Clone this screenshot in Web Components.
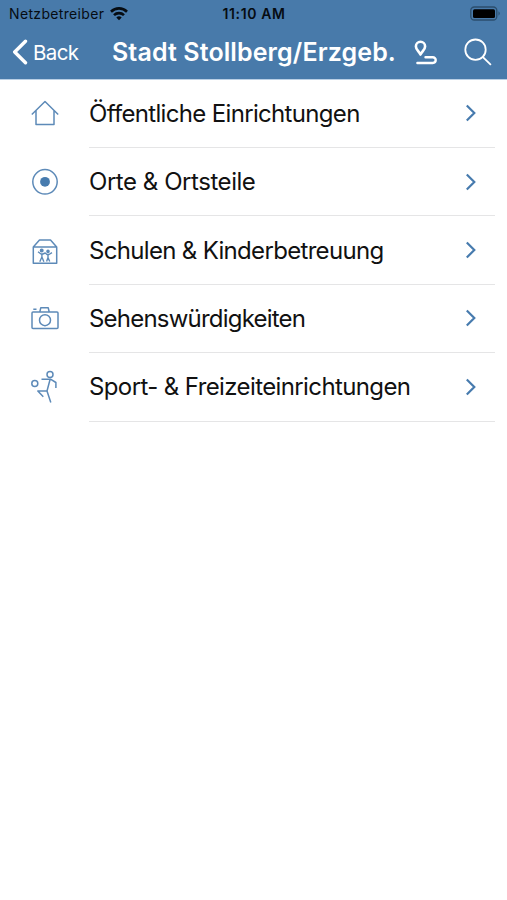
<!DOCTYPE html>
<html lang="de">
<head>
<meta charset="utf-8">
<title>Stadt Stollberg/Erzgeb.</title>
<style>
html, body { margin: 0; height: 100%; background: #fff; }
body { font-family: Inter, "Liberation Sans", sans-serif; overflow: hidden; }
</style>
</head>
<body>
<app-screen>
  <status-bar slot="top"></status-bar>
  <nav-bar slot="top" back="Back">Stadt Stollberg/Erzgeb.</nav-bar>
  <category-row icon="house" style="--ls:-.67px">Öffentliche Einrichtungen</category-row>
  <category-row icon="place" style="--ls:-.45px">Orte &amp; Ortsteile</category-row>
  <category-row icon="school" style="--ls:-.68px">Schulen &amp; Kinderbetreuung</category-row>
  <category-row icon="camera" style="--ls:-.79px">Sehenswürdigkeiten</category-row>
  <category-row icon="sport" style="--ls:-.61px">Sport- &amp; Freizeiteinrichtungen</category-row>
</app-screen>
<script>
class Base extends HTMLElement {
  connectedCallback() {
    if (!this.shadowRoot) this.attachShadow({ mode: 'open' }).innerHTML = this.view();
  }
}

customElements.define('app-screen', class extends Base {
  view() {
    return `<style>
      :host { display: flex; flex-direction: column; height: 900px; background: #fff; }
      header { background: #487aaa; height: 79.600px; border-bottom: 1px solid #b9cfe5; box-sizing: border-box; display: flex; flex-direction: column; }
      main { display: flex; flex-direction: column; }
    </style><header><slot name="top"></slot></header><main><slot></slot></main>`;
  }
});

customElements.define('status-bar', class extends Base {
  view() {
    return `<style>
      :host { display: grid; grid-template-columns: 1fr auto 1fr; align-items: center; height: 27px; padding: 0 6px 0 9px; color: #060c12; font-size: 14px; }
      .left { display: flex; align-items: center; gap: 6px; }
      .carrier { letter-spacing: .34px; }
      .time { font-weight: 600; letter-spacing: .62px; margin-right: 2px; }
      .battery { justify-self: end; }
      svg { display: block; }
    </style>
    <div class="left"><span class="carrier">Netzbetreiber</span>
      <svg width="18" height="14" viewBox="0 0 18 14" fill="none" stroke="#060c12" stroke-width="2.6">
        <path d="M1 4.700C5.500.3 12.500.3 17 4.700"/><path d="M4 8.100C6.800 5.400 11.200 5.400 14 8.100"/>
        <path d="M6.300 10.500Q9 8.100 11.700 10.500L9 13.300Z" fill="#060c12" stroke="none"/></svg></div>
    <span class="time">11:10 AM</span>
    <svg class="battery" width="31" height="15" viewBox="0 0 31 15">
      <rect x=".8" y="1" width="26" height="13" rx="3.500" fill="none" stroke="#2b4e6d" stroke-width="1.300"/>
      <rect x="3" y="3.200" width="22" height="8.800" rx="1.500" fill="#000"/>
      <path d="M28.500 5.300Q31 7.500 28.500 9.700Z" fill="#2b4e6d"/></svg>`;
  }
});

customElements.define('nav-bar', class extends Base {
  view() {
    return `<style>
      :host { display: flex; align-items: center; height: 50px; padding: 0 15px 0 12px; color: #fff; }
      .back { display: flex; align-items: center; width: 100px; gap: 5px; font-size: 20.500px; letter-spacing: -.6px; }
      .title { width: 302px; font-size: 25px; font-weight: 600; letter-spacing: .11px; white-space: nowrap; }
      .find { margin-left: auto; }
      svg { display: block; flex: none; }
    </style>
    <div class="back"><svg width="16" height="26" viewBox="0 0 16 26" fill="none" stroke="#fff" stroke-width="3.400" stroke-linecap="round" stroke-linejoin="round"><path d="M13.500 2.200 2.700 13 13.500 23.800"/></svg><span>${this.getAttribute('back')}</span></div>
    <div class="title"><slot></slot></div>
    <svg width="24" height="26" viewBox="0 0 24 26" fill="none" stroke="#fff">
      <path d="M6.500 15.600C5 12.200 1.900 10.600 1.900 7.400A4.600 4.600 0 0 1 11.100 7.400C11.100 10.600 8 12.200 6.500 15.600Z" stroke-width="2.600" stroke-linejoin="round"/>
      <path d="M11.500 18.200H18.800A2.900 2.900 0 0 1 18.800 24H3.400" stroke-width="2.400" stroke-linecap="round"/></svg>
    <svg class="find" width="28" height="28" viewBox="0 0 28 28" fill="none" stroke="#fff" stroke-width="1.800" stroke-linecap="round"><circle cx="11.500" cy="11.700" r="10.200"/><path d="M18.900 19.100 26.400 26.300"/></svg>`;
  }
});

const ICONS = {
  house: '<path d="M1.800 15.500 15 2.500 28.200 15.500M6 11.800V25.500H24V11.800"/>',
  place: '<circle cx="15" cy="14.800" r="12.200"/><circle cx="15" cy="14.800" r="4.900" fill="#477bae" stroke="none"/>',
  school: '<path d="M3.300 11H26.700V27.200H3.300ZM3.300 11 9.500 4H20.500L26.700 11"/><g stroke-width="1.400"><circle cx="11.700" cy="14.600" r="1.300" fill="#5d8ab8"/><circle cx="18" cy="15.400" r="1.100" fill="#5d8ab8"/><path d="M8 15.800 11 18H12.800L15.200 17 17 18.500H19L22 16.700M11.900 17.500V21.500M18 18V21.700M11.900 21 9.800 25.800M11.900 21 13.900 25.800M18 21.500 16.600 25.500M18 21.500 19.700 25.500"/></g>',
  camera: '<rect x="2" y="8" width="26" height="16.500" rx="1"/><path d="M9.800 8 10.800 3.700H18.200L19.200 8M3.300 5.300H6.500"/><circle cx="15" cy="16.200" r="5.500"/>',
  sport: '<circle cx="4.800" cy="11.500" r="3"/><circle cx="20" cy="2.400" r="3"/><path d="M11.500 7.200H20.500L25.900 10.500V16M20 7.800 17 19H7.800L13.300 24.800M17 19 20.800 30.500"/>'
};

customElements.define('category-row', class extends Base {
  view() {
    return `<style>
      :host { display: grid; grid-template-columns: 89px 406px; height: 68.400px; align-items: center; color: #111; }
      .icon { display: block; margin-left: 30px; overflow: visible; }
      .body { display: flex; align-items: center; justify-content: space-between; box-sizing: border-box; height: 100%; padding-right: 18px; border-bottom: 1px solid #e5e5e6; font-size: 24px; letter-spacing: var(--ls); white-space: nowrap; }
    </style>
    <svg class="icon" width="30" height="30" viewBox="0 0 30 30" fill="none" stroke="#5d8ab8" stroke-width="1.500" stroke-linejoin="round">${ICONS[this.getAttribute('icon')]}</svg>
    <div class="body"><span><slot></slot></span>
      <svg width="12" height="18" viewBox="0 0 12 18" fill="none" stroke="#477bae" stroke-width="2.200"><path d="M1.800 1.500 9.300 9 1.800 16.500"/></svg></div>`;
  }
});
</script>
</body>
</html>
